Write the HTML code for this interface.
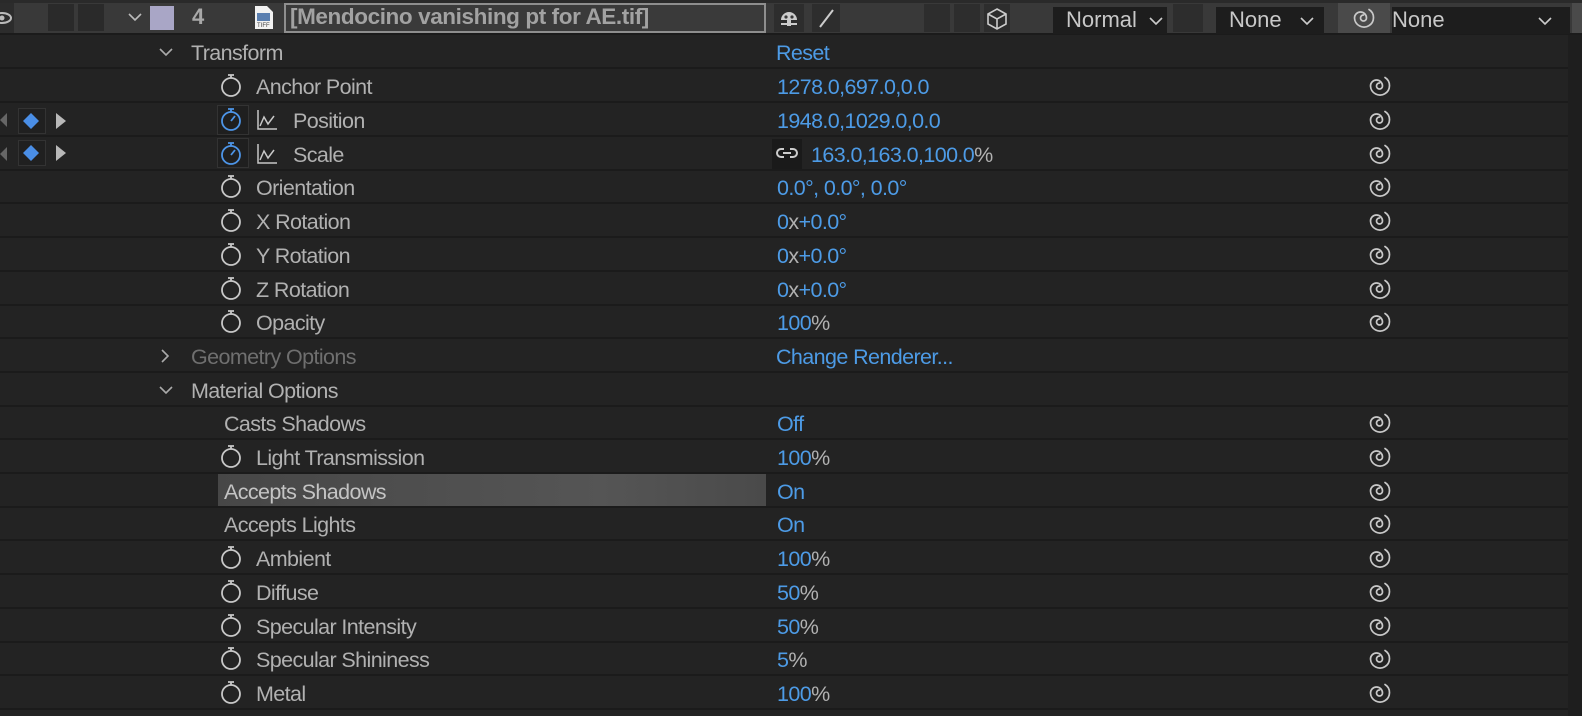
<!DOCTYPE html>
<html><head><meta charset="utf-8"><style>
*{margin:0;padding:0;box-sizing:border-box}
body{width:1582px;height:716px;background:#232323;font-family:"Liberation Sans",sans-serif;font-size:21.5px;color:#b1b1b1;position:relative;overflow:hidden}
.a{position:absolute}
.row{position:absolute;left:0;width:1582px;height:34px;border-bottom:2px solid #1b1b1b}
.t{position:absolute;top:6px;white-space:nowrap;letter-spacing:-0.6px}
.v{position:absolute;left:777px;top:6px;color:#4d9be6;white-space:nowrap;letter-spacing:-0.6px}
.g{color:#b1b1b1}
.sw{position:absolute;left:219px;top:4px}
.sp{position:absolute;left:1367px;top:4px}
.top{position:absolute;left:0;top:0;width:1582px;height:35px;background:#393939;border-top:3px solid #2a2a2a;border-bottom:2px solid #1b1b1b}
.dd{position:absolute;top:4px;height:27px;background:#1d1d1d;color:#c8c8c8;font-size:22px}
</style></head><body>
<svg width="0" height="0" style="position:absolute"><defs>
<symbol id="st" viewBox="0 0 24 24"><path d="M9 2 H15 M12 2 V5" stroke="currentColor" stroke-width="1.8" fill="none"/><circle cx="12" cy="14" r="9" fill="none" stroke="currentColor" stroke-width="1.8"/></symbol>
<symbol id="sb" viewBox="0 0 24 24"><path d="M9 2 H15 M12 2 V5" stroke="currentColor" stroke-width="1.8" fill="none"/><circle cx="12" cy="14" r="9" fill="none" stroke="currentColor" stroke-width="1.8"/><path d="M12 14 L16 9" stroke="currentColor" stroke-width="1.8"/></symbol>
<symbol id="spi" viewBox="0 0 26 26"><path d="M12.5 10 A3 3 0 1 0 15.5 13 A6 6 0 0 0 3.5 13 A9.5 9.5 0 1 0 18 4.5" fill="none" stroke="#c8c8c8" stroke-width="1.7" stroke-linecap="round"/></symbol>
<symbol id="gr" viewBox="0 0 24 24"><path d="M3 2 V21 H22 M5 18 L9 9 L13 16 L19 8" fill="none" stroke="#c8c8c8" stroke-width="1.5"/></symbol>
</defs></svg>
<div class="top">
  <div class="a" style="left:0;top:0;width:14px;height:30px;background:#2c2c2c"></div>
  <svg class="a" style="left:0;top:8px" width="12" height="14"><ellipse cx="2" cy="7" rx="9" ry="5" fill="none" stroke="#bbb" stroke-width="2"/><circle cx="2" cy="7" r="2.5" fill="#bbb"/></svg>
  <div class="a" style="left:48px;top:1px;width:26px;height:27px;background:#2a2a2a"></div>
  <div class="a" style="left:78px;top:1px;width:26px;height:27px;background:#2a2a2a"></div>
  <svg class="a" style="left:128px;top:9px" width="14" height="10"><path d="M1 2 L7 8 L13 2" fill="none" stroke="#bbb" stroke-width="1.6"/></svg>
  <div class="a" style="left:150px;top:3px;width:24px;height:24px;background:#a9a6c6"></div>
  <div class="a" style="left:192px;top:1px;font-size:22px;font-weight:bold;color:#a8a8a8">4</div>
  <svg class="a" style="left:254px;top:2px" width="20" height="25"><path d="M1 1 H13 L19 7 V24 H1 Z" fill="#f2f2f2"/><rect x="3" y="8" width="13" height="8" fill="#5a7fb0"/><text x="3" y="22" font-size="6" fill="#444" font-family="Liberation Sans">TIFF</text></svg>
  <div class="a" style="left:284px;top:0px;width:482px;height:30px;border:2px solid #8e8e8e;background:#3a3a3a"></div>
  <div class="a" style="left:290px;top:1px;font-size:22.5px;font-weight:bold;color:#a2a2a2;letter-spacing:-0.4px">[Mendocino vanishing pt for AE.tif]</div>
  <div class="a" style="left:774px;top:1px;width:30px;height:28px;background:#2d2d2d"></div>
  <svg class="a" style="left:777px;top:5px" width="24" height="20"><path d="M4 12 A8 8 0 0 1 20 12 Z" fill="#ccc"/><rect x="10" y="12" width="4" height="6" fill="#ccc"/><rect x="4" y="15" width="16" height="2" fill="#ccc"/><circle cx="9" cy="9" r="1.6" fill="#393939"/><circle cx="15" cy="9" r="1.6" fill="#393939"/></svg>
  <div class="a" style="left:812px;top:1px;width:28px;height:28px;background:#2d2d2d"></div>
  <svg class="a" style="left:812px;top:1px" width="28" height="28"><path d="M8 23 L21 6" stroke="#ccc" stroke-width="2"/></svg>
  <div class="a" style="left:924px;top:1px;width:26px;height:28px;background:#2d2d2d"></div>
  <div class="a" style="left:954px;top:1px;width:26px;height:28px;background:#2d2d2d"></div>
  <div class="a" style="left:984px;top:1px;width:26px;height:28px;background:#2d2d2d"></div>
  <svg class="a" style="left:985px;top:4px" width="24" height="24"><path d="M12 2 L21 7 V17 L12 22 L3 17 V7 Z M3 7 L12 12 L21 7 M12 12 V22" fill="none" stroke="#ccc" stroke-width="1.6"/></svg>
  <div class="dd" style="left:1053px;width:114px"><span class="a" style="left:13px;top:0px">Normal</span><svg class="a" style="left:96px;top:9px" width="14" height="10"><path d="M1 2 L7 8 L13 2" fill="none" stroke="#ccc" stroke-width="1.6"/></svg></div>
  <div class="a" style="left:1173px;top:1px;width:30px;height:28px;background:#2d2d2d"></div>
  <div class="dd" style="left:1216px;width:108px"><span class="a" style="left:13px;top:0px">None</span><svg class="a" style="left:84px;top:9px" width="14" height="10"><path d="M1 2 L7 8 L13 2" fill="none" stroke="#ccc" stroke-width="1.6"/></svg></div>
  <div class="a" style="left:1338px;top:0;width:52px;height:30px;background:#4a4a4a"></div>
  <svg class="a" style="left:1351px;top:2px" width="26" height="26"><use href="#spi"/></svg>
  <div class="dd" style="left:1392px;width:178px"><span class="a" style="left:0px;top:0px">None</span><svg class="a" style="left:146px;top:9px" width="14" height="10"><path d="M1 2 L7 8 L13 2" fill="none" stroke="#ccc" stroke-width="1.6"/></svg></div>
  <div class="a" style="left:1572px;top:0;width:10px;height:30px;background:#4a4a4a"></div>
</div>

<div class="row" style="top:35px"><svg class="a" style="left:159px;top:12px" width="14" height="10"><path d="M1 2 L7 8 L13 2" fill="none" stroke="#aaa" stroke-width="1.6"/></svg><span class="t" style="left:191px">Transform</span><span class="v" style="left:776px">Reset</span></div>

<div class="row" style="top:69px"><svg class="sw" width="24" height="24" style="color:#c8c8c8"><use href="#st"/></svg><span class="t" style="left:256px">Anchor Point</span><span class="v">1278.0,697.0,0.0</span><svg class="sp" width="26" height="26"><use href="#spi"/></svg></div>

<div class="row" style="top:103px">
<svg class="a" style="left:0;top:10px" width="8" height="14"><path d="M7 0 L0 7 L7 14Z" fill="#666"/></svg>
<div class="a" style="left:18px;top:5px;width:28px;height:26px;border:1px solid #333;background:#202020"></div>
<svg class="a" style="left:22px;top:9px" width="18" height="18"><path d="M9 1 L17 9 L9 17 L1 9Z" fill="#4a8ee6"/></svg>
<svg class="a" style="left:55px;top:10px" width="12" height="16"><path d="M1 0 L11 8 L1 16Z" fill="#b8b8b8"/></svg>
<div class="a" style="left:217px;top:2px;width:32px;height:30px;background:#1f1f1f;border:1px solid #333"></div>
<svg class="sw" width="24" height="24" style="color:#4d95e8"><use href="#sb"/></svg>
<svg class="a" style="left:255px;top:5px" width="24" height="24"><use href="#gr"/></svg>
<span class="t" style="left:293px">Position</span><span class="v">1948.0,1029.0,0.0</span><svg class="sp" width="26" height="26"><use href="#spi"/></svg></div>

<div class="row" style="top:137px">
<svg class="a" style="left:0;top:10px" width="8" height="14"><path d="M7 0 L0 7 L7 14Z" fill="#666"/></svg>
<div class="a" style="left:18px;top:3px;width:28px;height:26px;border:1px solid #333;background:#202020"></div>
<svg class="a" style="left:22px;top:7px" width="18" height="18"><path d="M9 1 L17 9 L9 17 L1 9Z" fill="#4a8ee6"/></svg>
<svg class="a" style="left:55px;top:8px" width="12" height="16"><path d="M1 0 L11 8 L1 16Z" fill="#b8b8b8"/></svg>
<div class="a" style="left:217px;top:1px;width:32px;height:30px;background:#1f1f1f;border:1px solid #333"></div>
<svg class="sw" width="24" height="24" style="color:#4d95e8"><use href="#sb"/></svg>
<svg class="a" style="left:255px;top:5px" width="24" height="24"><use href="#gr"/></svg>
<span class="t" style="left:293px">Scale</span>
<div class="a" style="left:772px;top:2px;width:30px;height:30px;background:#1a1a1a"></div>
<svg class="a" style="left:775px;top:9px" width="24" height="14"><path d="M9 3 H6 A4 4 0 0 0 6 11 H9 M15 3 H18 A4 4 0 0 1 18 11 H15 M8 7 H16" fill="none" stroke="#ccc" stroke-width="2"/></svg>
<span class="v" style="left:811px">163.0,163.0,100.0<span class="g">%</span></span><svg class="sp" width="26" height="26"><use href="#spi"/></svg></div>

<div class="row" style="top:170px"><svg class="sw" width="24" height="24" style="color:#c8c8c8"><use href="#st"/></svg><span class="t" style="left:256px">Orientation</span><span class="v">0.0°, 0.0°, 0.0°</span><svg class="sp" width="26" height="26"><use href="#spi"/></svg></div>
<div class="row" style="top:204px"><svg class="sw" width="24" height="24" style="color:#c8c8c8"><use href="#st"/></svg><span class="t" style="left:256px">X Rotation</span><span class="v">0<span class="g">x</span>+0.0°</span><svg class="sp" width="26" height="26"><use href="#spi"/></svg></div>
<div class="row" style="top:238px"><svg class="sw" width="24" height="24" style="color:#c8c8c8"><use href="#st"/></svg><span class="t" style="left:256px">Y Rotation</span><span class="v">0<span class="g">x</span>+0.0°</span><svg class="sp" width="26" height="26"><use href="#spi"/></svg></div>
<div class="row" style="top:272px"><svg class="sw" width="24" height="24" style="color:#c8c8c8"><use href="#st"/></svg><span class="t" style="left:256px">Z Rotation</span><span class="v">0<span class="g">x</span>+0.0°</span><svg class="sp" width="26" height="26"><use href="#spi"/></svg></div>
<div class="row" style="top:305px"><svg class="sw" width="24" height="24" style="color:#c8c8c8"><use href="#st"/></svg><span class="t" style="left:256px">Opacity</span><span class="v">100<span class="g">%</span></span><svg class="sp" width="26" height="26"><use href="#spi"/></svg></div>

<div class="row" style="top:339px"><svg class="a" style="left:160px;top:10px" width="10" height="14"><path d="M2 1 L8 7 L2 13" fill="none" stroke="#aaa" stroke-width="1.6"/></svg><span class="t" style="left:191px;color:#6f6f6f">Geometry Options</span><span class="v" style="left:776px">Change Renderer...</span></div>
<div class="row" style="top:373px"><svg class="a" style="left:159px;top:12px" width="14" height="10"><path d="M1 2 L7 8 L13 2" fill="none" stroke="#aaa" stroke-width="1.6"/></svg><span class="t" style="left:191px">Material Options</span></div>
<div class="row" style="top:406px"><span class="t" style="left:224px">Casts Shadows</span><span class="v">Off</span><svg class="sp" width="26" height="26"><use href="#spi"/></svg></div>
<div class="row" style="top:440px"><svg class="sw" width="24" height="24" style="color:#c8c8c8"><use href="#st"/></svg><span class="t" style="left:256px">Light Transmission</span><span class="v">100<span class="g">%</span></span><svg class="sp" width="26" height="26"><use href="#spi"/></svg></div>
<div class="row" style="top:474px"><div class="a" style="left:218px;top:0;width:548px;height:32px;background:linear-gradient(90deg,#474747,#555 70%,#4a4a4a)"></div><span class="t" style="left:224px;color:#c4c4c4">Accepts Shadows</span><span class="v">On</span><svg class="sp" width="26" height="26"><use href="#spi"/></svg></div>
<div class="row" style="top:507px"><span class="t" style="left:224px">Accepts Lights</span><span class="v">On</span><svg class="sp" width="26" height="26"><use href="#spi"/></svg></div>
<div class="row" style="top:541px"><svg class="sw" width="24" height="24" style="color:#c8c8c8"><use href="#st"/></svg><span class="t" style="left:256px">Ambient</span><span class="v">100<span class="g">%</span></span><svg class="sp" width="26" height="26"><use href="#spi"/></svg></div>
<div class="row" style="top:575px"><svg class="sw" width="24" height="24" style="color:#c8c8c8"><use href="#st"/></svg><span class="t" style="left:256px">Diffuse</span><span class="v">50<span class="g">%</span></span><svg class="sp" width="26" height="26"><use href="#spi"/></svg></div>
<div class="row" style="top:609px"><svg class="sw" width="24" height="24" style="color:#c8c8c8"><use href="#st"/></svg><span class="t" style="left:256px">Specular Intensity</span><span class="v">50<span class="g">%</span></span><svg class="sp" width="26" height="26"><use href="#spi"/></svg></div>
<div class="row" style="top:642px"><svg class="sw" width="24" height="24" style="color:#c8c8c8"><use href="#st"/></svg><span class="t" style="left:256px">Specular Shininess</span><span class="v">5<span class="g">%</span></span><svg class="sp" width="26" height="26"><use href="#spi"/></svg></div>
<div class="row" style="top:676px"><svg class="sw" width="24" height="24" style="color:#c8c8c8"><use href="#st"/></svg><span class="t" style="left:256px">Metal</span><span class="v">100<span class="g">%</span></span><svg class="sp" width="26" height="26"><use href="#spi"/></svg></div>
<div class="a" style="left:1568px;top:35px;width:14px;height:681px;background:#1e1e1e"></div>
</body></html>
